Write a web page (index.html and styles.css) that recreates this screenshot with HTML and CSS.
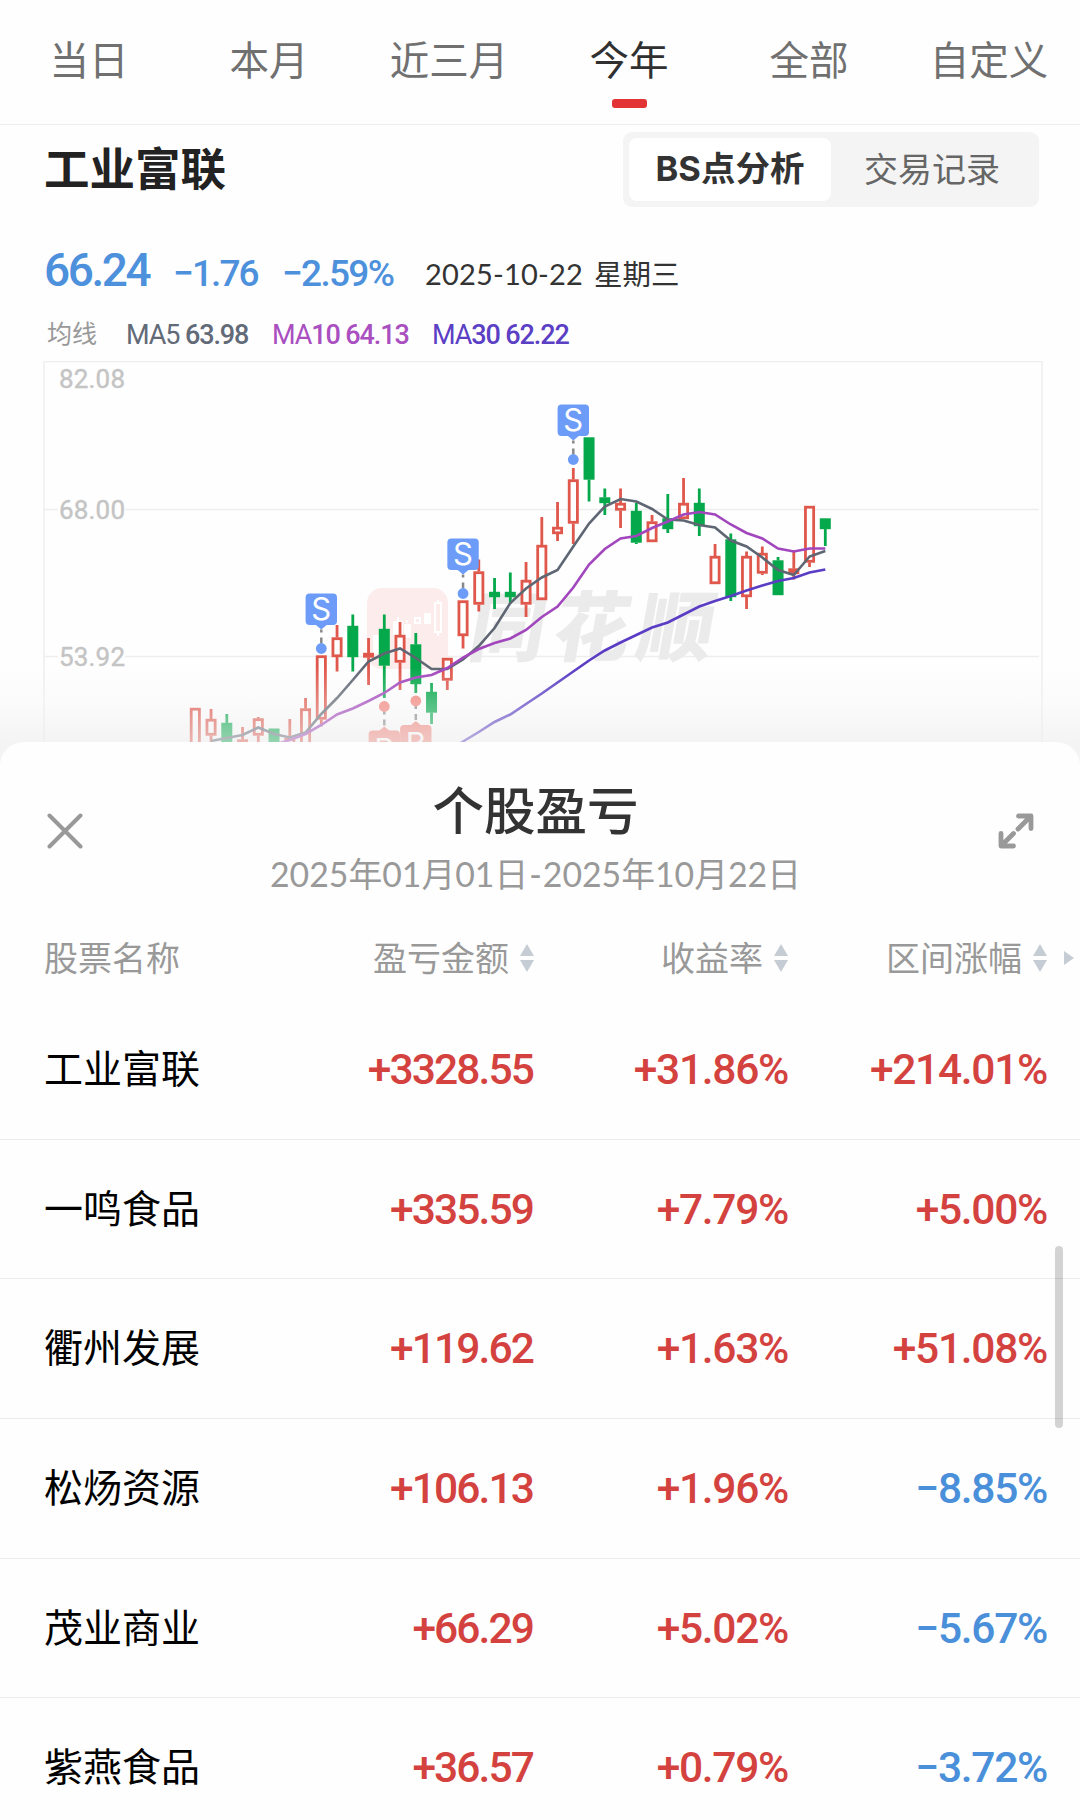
FILE: index.html
```html
<!DOCTYPE html>
<html lang="zh-CN">
<head>
    <meta charset="UTF-8">
    <title>个股盈亏</title>
    <link rel="stylesheet" href="styles.css">
</head>
<body>
    <nav class="tabs">
        <a class="tab">当日</a>
        <a class="tab">本月</a>
        <a class="tab">近三月</a>
        <a class="tab active">今年</a>
        <a class="tab">全部</a>
        <a class="tab">自定义</a>
    </nav>

    <section class="stock">
        <div class="stock-head">
            <h1>工业富联</h1>
            <div class="switch">
                <span class="switch-item selected">BS点分析</span>
                <span class="switch-item">交易记录</span>
            </div>
        </div>
        <div class="quote">
            <span class="price">66.24</span>
            <span class="change">−1.76</span>
            <span class="percent">−2.59%</span>
            <span class="date">2025-10-22</span>
            <span class="week">星期三</span>
        </div>
        <div class="averages">
            <span class="avg-label">均线</span>
            <span class="ma5">MA5 <b>63.98</b></span>
            <span class="ma10">MA<b>10 64.13</b></span>
            <span class="ma30">MA<b>30 62.22</b></span>
        </div>
        <svg id="chart" viewBox="43 361 1000 415" width="1000" height="415">
            <rect class="frame" x="44" y="361.5" width="998" height="440"/>
            <path class="grid-line" d="M44 509.5h14M125 509.5h914M44 656.5h14M125 656.5h914"/>
            <text class="axis" x="59" y="388" textLength="66">82.08</text>
            <text class="axis" x="59" y="519" textLength="66">68.00</text>
            <text class="axis" x="59" y="666" textLength="66">53.92</text>
            <g class="watermark">
                <rect class="mark-box" x="367" y="588" width="81" height="81" rx="15"/>
                <path class="mark-candles" d="M373 635h6v-3h6v22h-12zM393 621h10v14h-10zM404 624h7v14h-7zM424 613h7v11h-7z"/>
                <path class="mark-line" d="M415 618h5v5h-5zM435 603h6v29h-6zM438 600v3M438 632v4M398 617v4M407 620v3"/>
                <text class="mark-text" x="0" y="0" textLength="244" transform="translate(466 655) skewX(-10)">同花顺</text>
            </g>
            <g id="candles"></g>
            <g id="lines"></g>
            <g id="marks"></g>
        </svg>
        <div class="fade"></div>
    </section>

    <section class="sheet">
        <header class="sheet-head">
            <svg class="close" viewBox="0 0 36 36" width="36" height="36">
                <path d="M2.500 2.500L33.500 33.500M33.500 2.500L2.500 33.500"/>
            </svg>
            <div class="sheet-title">
                <h2>个股盈亏</h2>
                <p>2025年01月01日<i class="to">-</i>2025年10月22日</p>
            </div>
            <svg class="expand" viewBox="0 0 36 36" width="36" height="36">
                <path d="M20.500 3H33V15.500M32.500 3.500L20 16M3 20.500V33H15.500M3.500 32.500L15.500 20.500"/>
            </svg>
        </header>

        <div class="row row-head">
            <span>股票名称</span>
            <span class="sortable">盈亏金额<i class="sort"></i></span>
            <span class="sortable">收益率<i class="sort"></i></span>
            <span class="sortable">区间涨幅<i class="sort"></i></span>
            <i class="more"></i>
        </div>
        <div class="row">
            <span class="name">工业富联</span>
            <span class="num amount up">+3328.55</span>
            <span class="num up">+31.86%</span>
            <span class="num up">+214.01%</span>
        </div>
        <div class="row">
            <span class="name">一鸣食品</span>
            <span class="num amount up">+335.59</span>
            <span class="num up">+7.79%</span>
            <span class="num up">+5.00%</span>
        </div>
        <div class="row">
            <span class="name">衢州发展</span>
            <span class="num amount up">+119.62</span>
            <span class="num up">+1.63%</span>
            <span class="num up">+51.08%</span>
        </div>
        <div class="row">
            <span class="name">松炀资源</span>
            <span class="num amount up">+106.13</span>
            <span class="num up">+1.96%</span>
            <span class="num down">−8.85%</span>
        </div>
        <div class="row">
            <span class="name">茂业商业</span>
            <span class="num amount up">+66.29</span>
            <span class="num up">+5.02%</span>
            <span class="num down">−5.67%</span>
        </div>
        <div class="row">
            <span class="name">紫燕食品</span>
            <span class="num amount up">+36.57</span>
            <span class="num up">+0.79%</span>
            <span class="num down">−3.72%</span>
        </div>
        <div class="scrollbar"></div>
    </section>

    <script>
        // type, high, body top, body bottom, low (r = hollow, f = filled red, g = green)
        var candles = [
            ['r', 708, 708, 765, 765], ['r', 709, 719, 735.5, 742], ['g', 714, 723, 765, 765],
            ['r', 727, 739.5, 741, 760], ['r', 717, 718.5, 735.5, 742], ['g', 728.7, 728.7, 765, 765],
            ['r', 719, 738, 760, 760], ['r', 698, 708.5, 765, 765], ['r', 655.5, 655.5, 719.5, 726.5],
            ['r', 625, 637.5, 657, 671.5], ['g', 614.5, 626, 657, 671.5], ['f', 638, 653, 657.5, 685],
            ['g', 614.5, 629, 665.5, 698], ['r', 622, 635, 662.5, 690], ['g', 633, 644.5, 684, 693],
            ['g', 683, 692, 712.5, 724], ['r', 658, 658, 680.5, 690], ['r', 600.5, 600.5, 636, 648.5],
            ['r', 559.5, 571.5, 604.5, 611.5], ['g', 578, 592, 597, 609], ['g', 572.5, 592, 597, 603.5],
            ['r', 562, 580, 604.5, 617], ['r', 517, 545, 600, 600], ['r', 502, 527, 534, 541],
            ['r', 468, 479.5, 523.5, 544], ['g', 437.5, 437.5, 479.5, 501.5], ['g', 488.5, 497.5, 503, 515],
            ['r', 488.5, 503, 510.5, 528], ['g', 503, 511, 542.5, 544], ['r', 515, 521.5, 542, 542],
            ['g', 494, 518.5, 529, 533], ['r', 478, 503, 519, 519], ['g', 488.5, 503, 526, 536],
            ['r', 544, 556, 584, 584], ['g', 533.5, 539.5, 597, 601], ['r', 551.5, 556, 597, 609],
            ['r', 546.5, 553, 573.5, 575], ['g', 557, 560.5, 595, 595], ['f', 550, 568.5, 574, 579.5],
            ['r', 506, 506, 562.5, 567], ['g', 518.5, 518.5, 529, 546]
        ];
        // moving averages: first candle index and the values after it
        var averages = [
            ['ma5', 1, [741, 738, 735, 727.5, 734, 737.5, 732.5, 714, 698, 680, 661.5, 653.5, 648.5, 658, 669, 669, 659.5, 646, 628, 603, 588.5, 577.5, 570, 546.5, 523.5, 506.5, 499, 501.5, 509, 519.5, 520.5, 525, 527.5, 540.5, 546.5, 557.5, 570, 575, 556.5, 551]],
            ['ma10', 4, [752, 745, 740, 734, 725, 714.5, 708.5, 701, 693, 682.5, 677.5, 675, 668, 657.5, 649, 643, 638.5, 630, 617, 606.5, 587.5, 564.5, 549, 538.5, 536, 528, 521.5, 514.5, 512, 514.5, 524.5, 533, 538.5, 548.5, 551.5, 548.5, 548.5]],
            ['ma30', 16, [751, 741.5, 732, 722, 714.5, 704, 693.5, 682.5, 671.5, 660.5, 650.5, 642.5, 635, 627.5, 622.5, 614.5, 606.5, 601, 596, 590.5, 585.5, 581, 578, 572.5, 569.5]]
        ];
        // letter, candle index, dot y
        var marks = [['S', 8, 648.5], ['S', 17, 593.5], ['S', 24, 459.5], ['B', 12, 706.5], ['B', 14, 701]];

        function x(i) {
            return 195.3 + 15.75 * i;
        }

        var html = '';
        candles.forEach(function (c, i) {
            var cx = x(i);
            html += '<g class="candle-' + c[0] + '">';
            html += '<path d="M' + cx + ' ' + c[1] + 'V' + c[2] + 'M' + cx + ' ' + c[3] + 'V' + c[4] + '"/>';
            html += '<rect x="' + (cx - 4.1) + '" y="' + (c[2] + 1.2) + '" width="8.2" height="' + Math.max(c[3] - c[2] - 2.4, 1) + '"/></g>';
        });
        document.getElementById('candles').innerHTML = html;

        html = '';
        averages.forEach(function (a) {
            var points = a[2].map(function (y, i) {
                return x(a[1] + i) + ',' + y;
            });
            html += '<polyline class="line-' + a[0] + '" points="' + points.join(' ') + '"/>';
        });
        document.getElementById('lines').innerHTML = html;

        html = '';
        marks.forEach(function (m) {
            var cx = x(m[1]), y = m[2], up = m[0] === 'S';
            var top = up ? y - 55 : y + 24;
            var tip = up ? [top + 31, top + 36] : [top + 1, top - 4];
            html += '<g class="mark-' + m[0] + '">';
            html += '<path class="dash" d="' + (up ? 'M' + cx + ' ' + (y - 19) + 'v3M' + cx + ' ' + (y - 11) + 'v6' : 'M' + cx + ' ' + (y + 4) + 'v4M' + cx + ' ' + (y + 13) + 'v6') + '"/>';
            html += '<circle cx="' + cx + '" cy="' + y + '" r="5.4"/>';
            html += '<rect x="' + (cx - 15.7) + '" y="' + top + '" width="31.4" height="31.4" rx="4"/>';
            html += '<path d="M' + (cx - 6) + ' ' + tip[0] + 'L' + cx + ' ' + tip[1] + 'L' + (cx + 6) + ' ' + tip[0] + 'z"/>';
            html += '<text x="' + cx + '" y="' + (top + (up ? 26 : 30)) + '">' + m[0] + '</text></g>';
        });
        document.getElementById('marks').innerHTML = html;
    </script>
</body>
</html>
```

FILE: styles.css
```css
* {
    box-sizing: border-box;
}

body {
    margin: 0;
    width: 1080px;
    height: 1820px;
    overflow: hidden;
    background: #fefefe;
    color: #333;
    font-family: Lato, "Noto Sans CJK SC", sans-serif;
}

h1, h2, p {
    margin: 0;
}

i {
    font-style: normal;
}

.tabs {
    display: grid;
    grid-template-columns: repeat(6, 180px);
    height: 125px;
    margin-left: -1px;
    width: 1081px;
    border-bottom: 1px solid #eee;
}

.tab {
    display: flex;
    flex-direction: column;
    align-items: center;
    padding-top: 30px;
    font-size: 39.5px;
    line-height: 60px;
    color: #707070;
}

.tab.active {
    color: #303030;
}

.tab.active::after {
    content: "";
    width: 35px;
    height: 9px;
    margin-top: 9px;
    border-radius: 3px;
    background: #e23434;
}

.stock {
    position: relative;
    height: 641px;
    padding-top: 7px;
    overflow: hidden;
}

.stock-head {
    display: flex;
    justify-content: space-between;
    align-items: center;
    height: 75px;
    margin: 0 41px 0 44px;
}

.stock-head h1 {
    font-size: 45.5px;
    line-height: 60px;
    margin-top: -2px;
    color: #222;
}

.switch {
    display: flex;
    width: 416px;
    height: 75px;
    padding: 6px;
    border-radius: 9px;
    background: #f4f4f4;
}

.switch-item {
    flex: 1;
    text-align: center;
    font-size: 34px;
    line-height: 62px;
    color: #666;
}

.switch-item.selected {
    border-radius: 8px;
    background: #fff;
    color: #333;
    font-family: Inter, "Noto Sans CJK SC", sans-serif;
    font-size: 34.5px;
    font-weight: 700;
}

.quote {
    display: flex;
    align-items: baseline;
    height: 60px;
    margin: 33px 0 0 44px;
    line-height: 60px;
    font-family: Roboto, "Noto Sans CJK SC", sans-serif;
    font-weight: 500;
    color: #4d90dc;
    white-space: nowrap;
}

.price {
    width: 129px;
    font-size: 46px;
    letter-spacing: -2.4px;
}

.change {
    width: 109px;
    font-size: 37px;
    letter-spacing: -1.9px;
}

.percent {
    width: 143px;
    font-size: 37px;
    letter-spacing: -1.7px;
}

.date {
    width: 169px;
    font-family: Lato, sans-serif;
    font-size: 29px;
    font-weight: 400;
    letter-spacing: 0.2px;
    color: #333;
}

.week {
    font-size: 28.5px;
    font-weight: 400;
    color: #333;
}

.date, .week {
    position: relative;
    top: -1px;
}

.averages {
    display: flex;
    height: 40px;
    margin: 15px 0 0 47px;
    line-height: 40px;
    font-family: Roboto, "Noto Sans CJK SC", sans-serif;
    font-size: 27px;
    letter-spacing: -1.1px;
}

.averages b {
    font-weight: 500;
}

.avg-label {
    width: 79px;
    font-size: 25px;
    letter-spacing: 0;
    color: #999;
}

.ma5 {
    width: 146px;
    color: #626a78;
}

.ma10 {
    width: 160px;
    color: #a94fc0;
}

.ma30 {
    color: #5b3fc4;
}

#chart {
    display: block;
    margin: 6px 0 0 43px;
}

.frame, .grid-line {
    fill: none;
    stroke: #eee;
    stroke-width: 1.5;
}

.axis {
    font-family: Roboto, sans-serif;
    font-size: 26px;
    fill: #c4c4c4;
    stroke: #c4c4c4;
    stroke-width: 0.4;
}

.mark-box {
    fill: #fdecec;
}

.mark-candles {
    fill: #fff;
}

.mark-line {
    fill: none;
    stroke: #fff;
    stroke-width: 2;
}

.mark-text {
    font-family: "Noto Sans CJK SC", sans-serif;
    font-size: 76px;
    font-weight: 900;
    fill: #ebebeb;
}

#candles g {
    stroke-width: 2.8;
}

.candle-r, .candle-f {
    fill: #fefefe;
    stroke: #e0574c;
}

.candle-f {
    fill: #e8453c;
}

.candle-g {
    fill: #05a84b;
    stroke: #05a84b;
}

#lines polyline {
    fill: none;
    stroke-width: 2.6;
}

.line-ma5 {
    stroke: #5f6673;
}

.line-ma10 {
    stroke: #a246bd;
}

.line-ma30 {
    stroke: #5a3dc4;
}

#marks text {
    fill: #fff;
    font-family: Inter, sans-serif;
    font-size: 31px;
    font-weight: 400;
    text-anchor: middle;
}

#marks .dash {
    stroke: #888;
    stroke-width: 2.5;
}

.mark-S {
    fill: #6c9bf8;
}

.mark-B {
    fill: #f4867e;
}

.fade {
    position: absolute;
    left: 0;
    right: 0;
    bottom: 0;
    height: 99px;
    background: linear-gradient(rgba(255, 255, 255, 0), rgba(244, 244, 244, 0.3) 35%, rgba(238, 238, 238, 0.62) 76%);
}

/* the sheet slides over the bottom of the chart */
.sheet {
    position: relative;
    height: 1078px;
    margin-top: -24px;
    border-radius: 24px 24px 0 0;
    background: #fefefe;
}

.sheet-head {
    display: flex;
    justify-content: space-between;
    height: 173px;
    padding: 36px 46px 0 47px;
}

.close, .expand {
    margin-top: 35px;
    fill: none;
    stroke: #999;
    stroke-width: 4;
    stroke-linecap: round;
}

.expand {
    stroke-width: 4.8;
    stroke-linejoin: round;
}

.sheet-title {
    margin-left: -10px;
    text-align: center;
}

.sheet-title h2 {
    font-size: 51.5px;
    font-weight: 500;
    line-height: 64px;
}

.sheet-title p {
    font-size: 33.8px;
    line-height: 65px;
    color: #999;
}

.to {
    padding: 0 1px;
}

.row {
    display: grid;
    grid-template-columns: 250px 240px 254px 259px;
    align-items: center;
    height: 139.7px;
    padding-left: 44px;
    border-bottom: 1px solid #ececec;
}

.row-head {
    grid-template-columns: 250px 240px 254px 259px 27px;
    height: 85px;
    padding-bottom: 3px;
    border-bottom: 0;
    font-size: 34px;
    color: #999;
}

.sortable {
    display: flex;
    justify-content: flex-end;
    align-items: center;
}

.sort {
    display: flex;
    flex-direction: column;
    gap: 4px;
    margin: 4px 0 0 11px;
}

.sort::before, .sort::after {
    content: "";
    border: 7.5px solid transparent;
    border-top-width: 0;
    border-bottom: 12.5px solid #c5ccd3;
}

.sort::after {
    border-bottom-width: 0;
    border-top: 12.5px solid #c5ccd3;
}

.more {
    justify-self: end;
    margin-top: 4px;
    border: 7px solid transparent;
    border-right-width: 0;
    border-left: 10px solid #c5ccd3;
}

.name {
    padding-bottom: 7px;
    font-size: 39px;
    color: #000;
}

.num {
    font-family: Roboto, sans-serif;
    font-size: 42.5px;
    font-weight: 500;
    letter-spacing: -1.3px;
    text-align: right;
}

.amount {
    padding-right: 1px;
    letter-spacing: -1.9px;
}

.up {
    color: #d44240;
}

.down {
    color: #4a8fd9;
}

.scrollbar {
    position: absolute;
    top: 504px;
    right: 17px;
    width: 8px;
    height: 182px;
    border-radius: 4px;
    background: rgba(0, 0, 0, 0.17);
}
```
